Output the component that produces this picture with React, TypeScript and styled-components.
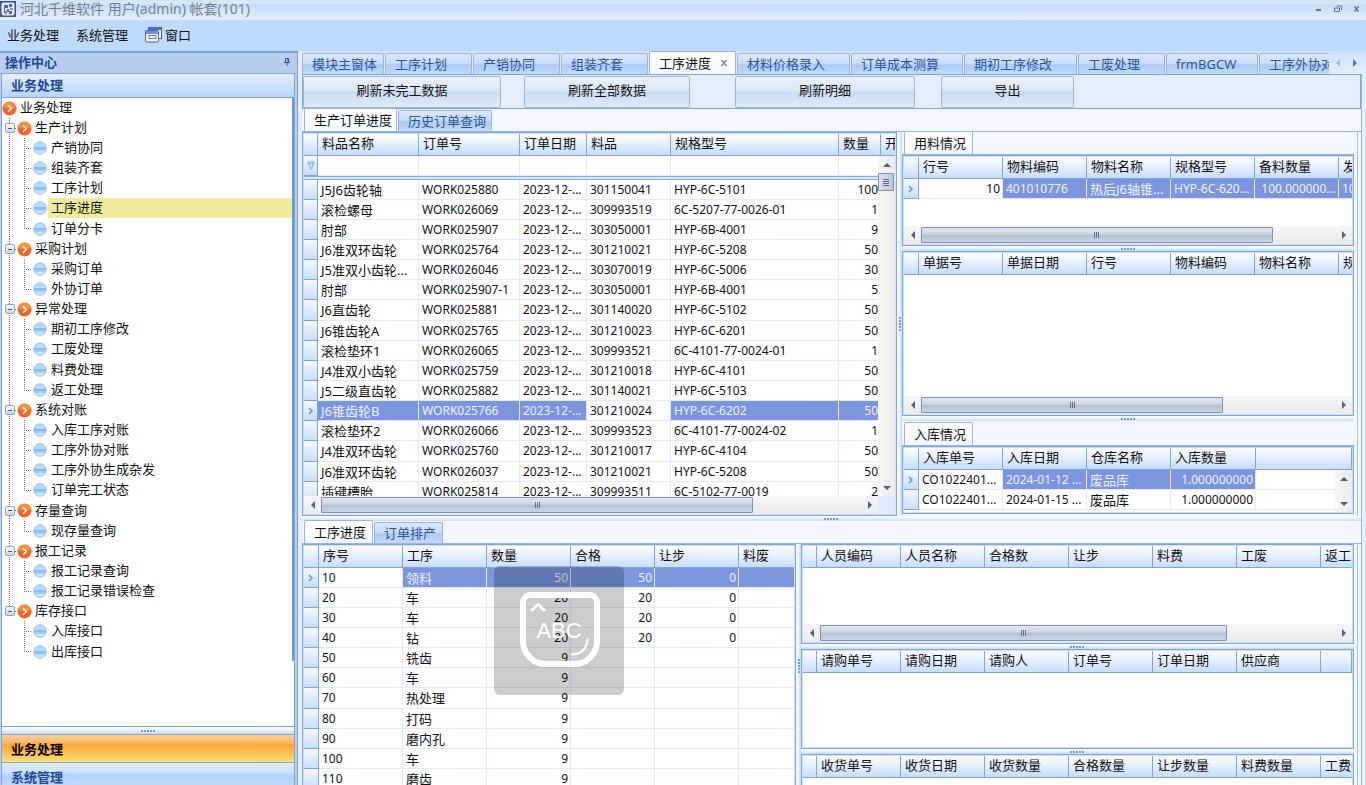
import React from 'react';
import styled, { createGlobalStyle, css } from 'styled-components';

const LINE = '#7ea6dc';
const HEAD_BG = 'linear-gradient(#fbfdff, #e6f0ff 45%, #c6ddfd)';

const GlobalStyle = createGlobalStyle`
  *, *::before, *::after { box-sizing: border-box; }
  body {
    margin: 0;
    overflow: hidden;
    background: #e3eeff;
    color: #111;
    font-family: "Noto Sans", "Noto Sans CJK SC", sans-serif;
    font-size: 13px;
    line-height: 18px;
  }
  button {
    margin: 0;
    padding: 0;
    border: 0;
    background: none;
    color: inherit;
    font: inherit;
    text-align: left;
    white-space: nowrap;
  }
  ul { margin: 0; padding: 0; list-style: none; }
`;

/* ---------- window frame ---------- */

const Window = styled.div`
  display: flex;
  flex-direction: column;
  height: 100vh;
  overflow: hidden;
`;

const TitleBar = styled.header`
  display: flex;
  align-items: center;
  flex: none;
  height: 21px;
  padding-bottom: 3px;
  border-bottom: 1px solid #b4e0fa;
  background: linear-gradient(#d3e2f8 0, #dbe8fa 3px, #c6dbf8 5px, #e2edfc 19px);
`;

const Title = styled.h1`
  flex: 1;
  margin: 0 0 0 4px;
  color: #78828f;
  font-size: 14px;
  font-weight: 400;
  line-height: 16px;
`;

const WindowButton = styled.button`
  display: flex;
  justify-content: center;
  width: 19px;
`;

const MenuBar = styled.nav`
  display: flex;
  align-items: center;
  flex: none;
  gap: 17px;
  height: 30px;
  padding: 0 7px 3px;
  background: #bddaff;
`;

const MenuItem = styled.button`
  display: flex;
  align-items: center;
  gap: 3px;
`;

const Workspace = styled.div`
  display: flex;
  flex: 1;
  gap: 4px;
  min-height: 0;
`;

/* ---------- sidebar ---------- */

const Sidebar = styled.aside`
  display: flex;
  flex-direction: column;
  flex: none;
  width: 298px;
  padding: 0 2px 0 1px;
  border-top: 2px solid #7b9ed2;
  border-right: 1px solid #7b9ed2;
  background: #b7ceee;
`;

const SidebarTitle = styled.h2`
  display: flex;
  align-items: center;
  justify-content: space-between;
  flex: none;
  height: 20px;
  margin: 0;
  padding: 0 4px 2px;
  color: #1d4a94;
  font-size: 13px;
  line-height: 18px;
`;

const SidebarBody = styled.div`
  display: flex;
  flex-direction: column;
  flex: 1;
  min-height: 0;
  overflow: hidden;
  border: 1px solid ${LINE};
  border-bottom: 0;
  background: #fff;
`;

const SectionTitle = styled.h3`
  flex: none;
  height: 24px;
  margin: 0;
  padding: 0 9px;
  border-bottom: 1px solid ${LINE};
  background: linear-gradient(#e6f0ff, #d0e3ff 45%, #b5d5ff);
  color: #1d4a94;
  font-size: 13px;
  line-height: 22px;
`;

const Tree = styled.ul`
  flex: 1;
  min-height: 0;
  overflow: hidden;
  padding-right: 2px;
  background: linear-gradient(#6c98d6, #6c98d6) right top / 2px 563px no-repeat;
`;

const TreeRow = styled.li`
  display: flex;
  align-items: center;
  height: 20px;
  &:nth-child(7n) { height: 21px; }
`;

const dots = (dir: string) => `repeating-linear-gradient(${dir}, #777 0 1px, transparent 1px 2px)`;

const Guide = styled.span<{ $line: 'none' | 'full' | 'half'; $tick?: boolean }>`
  flex: none;
  align-self: stretch;
  display: flex;
  align-items: center;
  justify-content: center;
  width: 15px;
  background-repeat: no-repeat;
  background-image: ${p => (p.$line === 'none' ? 'none' : dots('180deg'))}${p => (p.$tick ? `, ${dots('90deg')}` : '')};
  background-size: 1px ${p => (p.$line === 'half' ? '50%' : '100%')}, 8px 1px;
  background-position: 7px 0, 7px 10px;
`;

const Expander = styled.button`
  display: flex;
  align-items: center;
  justify-content: center;
  width: 10px;
  height: 10px;
  border: 1px solid #8ba3c7;
  border-radius: 2px;
  background: linear-gradient(#fff, #c9d6ea);
  &::before { content: ''; width: 4px; height: 1px; background: #3c5a8c; }
`;

const LeafIconBox = styled.span`
  display: flex;
  flex: none;
  width: 16px;
  padding-left: 1px;
`;

const TreeLabel = styled.button<{ $active?: boolean }>`
  flex: 1;
  align-self: stretch;
  padding: 0 0 2px 3px;
  background: ${p => (p.$active ? '#efeb9b' : 'none')};
`;

const Grip = styled.div<{ $vertical?: boolean }>`
  display: flex;
  flex: none;
  align-items: center;
  justify-content: center;
  ${p => (p.$vertical ? 'width: 5px;' : 'height: 5px;')}
  background: linear-gradient(${p => (p.$vertical ? '90deg' : '180deg')}, #fff, #e8f2ff 50%, #c4dcfb);
  &::before {
    content: '';
    ${p => (p.$vertical ? 'width: 2px; height: 15px;' : 'width: 15px; height: 2px;')}
    background: repeating-linear-gradient(${p => (p.$vertical ? '180deg' : '90deg')}, #6f9edd 0 2px, transparent 2px 3px);
  }
`;

const NavGrip = styled(Grip)`
  height: 8px;
  border-top: 1px solid ${LINE};
`;

const NavButton = styled.button<{ $active?: boolean }>`
  flex: none;
  height: 28px;
  padding: 0 9px;
  border-top: 1px solid ${LINE};
  background: ${p =>
    p.$active
      ? 'linear-gradient(#ffcf94, #ffbd6c 25%, #ffa63b 38%, #fdc455 70%, #fde07c)'
      : 'linear-gradient(#dcebff, #cde1ff 35%, #afd0ff 45%, #c1dcff)'};
  color: ${p => (p.$active ? '#000' : '#1d4a94')};
  font-weight: 700;
  &:last-child { margin-bottom: -5px; }
`;

/* ---------- document area ---------- */

const Main = styled.main`
  display: flex;
  flex-direction: column;
  flex: 1;
  min-width: 0;
`;

const TabStrip = styled.div`
  display: flex;
  align-items: flex-end;
  flex: none;
  height: 23px;
  padding-right: 3px;
  background: linear-gradient(#cfe2fd, #e3eeff);
`;

const TabScroller = styled.div`
  display: flex;
  align-items: flex-end;
  flex: 1;
  gap: 1px;
  min-width: 0;
  overflow: hidden;
`;

const Tab = styled.button<{ $active?: boolean; $width: number }>`
  display: flex;
  align-items: center;
  justify-content: space-between;
  flex: none;
  width: ${p => p.$width}px;
  height: 21px;
  padding: 0 7px 1px 9px;
  border: 1px solid #9bb6dc;
  border-bottom: 0;
  border-radius: 2px 2px 0 0;
  background: linear-gradient(#dbe8fa, #c9ddf8 45%, #abcbf4 55%, #c3dbfa);
  color: #2b549e;
  ${p =>
    p.$active &&
    css`
      height: 23px;
      background: linear-gradient(#fff, #f3f7ff);
      color: #111;
    `}
`;

const TabArrow = styled.button`
  display: flex;
  align-items: center;
  justify-content: center;
  width: 17px;
  height: 23px;
`;

const Page = styled.div`
  display: flex;
  flex-direction: column;
  flex: 1;
  min-height: 0;
  margin-right: 4px;
  border-top: 1px solid ${LINE};
  border-right: 1px solid #9db7de;
  background: #f3f7ff;
`;

const Toolbar = styled.div`
  display: flex;
  align-items: center;
  flex: none;
  height: 34px;
  border: 1px solid ${LINE};
  border-top: 0;
  background: #e3eeff;
`;

const ToolButton = styled.button<{ $width: number; $before?: number }>`
  width: ${p => p.$width}px;
  height: 32px;
  margin-left: ${p => p.$before ?? 0}px;
  padding-bottom: 3px;
  border: 1px solid #9fb6d8;
  border-radius: 2px;
  background: linear-gradient(#e9f1fb, #dbe8f8 45%, #cadcf2 52%, #dfeafa);
  text-align: center;
`;

const SubTabs = styled.div<{ $height?: number }>`
  display: flex;
  align-items: flex-end;
  flex: none;
  gap: 1px;
  height: ${p => p.$height ?? 23}px;
  padding: 1px 2px 0;
  border-bottom: 1px solid #9fb4d8;
`;

const Upper = styled.div`
  display: flex;
  flex: 385 1 0;
  min-height: 0;
  margin-right: 3px;
  padding-right: 3px;
  border-right: 1px solid #a9bfe0;
`;

const Lower = styled(Upper)`
  flex: 244 1 0;
  margin-bottom: -3px;
`;

const Column = styled.section<{ $grow: number }>`
  position: relative;
  display: flex;
  flex-direction: column;
  flex: ${p => p.$grow} 1 0;
  min-width: 0;
`;

const Panel = styled.div<{ $height?: number; $after?: number }>`
  position: relative;
  display: flex;
  flex-direction: column;
  flex: ${p => (p.$height ? `0 0 ${p.$height}px` : '1 1 0')};
  min-height: 0;
  margin-bottom: ${p => p.$after ?? 0}px;
  padding: 1px;
  border: 1px solid ${LINE};
  background: #cfe1fb;
`;

const Viewport = styled.div`
  flex: 1;
  min-height: 0;
  overflow: hidden;
  background: #fff;
`;

const Table = styled.table<{ $fill?: boolean }>`
  width: ${p => (p.$fill ? '100%' : '1px')};
  border-spacing: 0;
  table-layout: fixed;
`;

const Col = styled.col<{ $width?: number }>`
  width: ${p => (p.$width ? `${p.$width}px` : 'auto')};
`;

const HeadCell = styled.th`
  height: 22px;
  padding: 0 0 3px 4px;
  overflow: hidden;
  border-right: 1px solid ${LINE};
  border-bottom: 1px solid ${LINE};
  background: ${HEAD_BG};
  font-weight: 400;
  line-height: 17px;
  text-align: left;
  white-space: nowrap;
`;

const Row = styled.tr`
  height: 20px;
  &:nth-child(7n) { height: 21px; }
`;

const Cell = styled.td<{ $selected?: boolean; $num?: boolean; $code?: boolean }>`
  padding: 0 2px 0 3px;
  overflow: hidden;
  border-right: 1px solid #dfebfd;
  border-bottom: 1px solid #dfebfd;
  background: ${p => (p.$selected ? '#7b96df' : '#fff')};
  color: ${p => (p.$selected ? '#edf2ff' : '#111')};
  font-size: ${p => (p.$code ? 12 : 13)}px;
  line-height: 18px;
  text-align: ${p => (p.$num ? 'right' : 'left')};
  white-space: nowrap;
`;

const Indicator = styled.td`
  padding: 0;
  border-right: 1px solid ${LINE};
  border-bottom: 1px solid ${LINE};
  background: linear-gradient(#f4f9ff, #c9defc);
  line-height: 0;
  text-align: center;
`;

const FilterRule = styled.td`
  height: 4px;
  padding: 0;
  border-top: 1px solid #86aee3;
  border-bottom: 1px solid #86aee3;
  background: #d7e7fd;
`;

/* ---------- scroll bars ---------- */

const HBar = styled.div`
  display: flex;
  flex: 1;
  height: 18px;
  background: linear-gradient(#f6f6f6, #ebebed);
`;

const BarLine = styled.div`
  display: flex;
  flex: none;
`;

const BarCorner = styled.span`
  flex: none;
  width: 17px;
  background: #dfebfc;
`;

const ArrowButton = styled.button`
  display: flex;
  align-items: center;
  justify-content: center;
  flex: none;
  width: 17px;
  height: 17px;
`;

const Track = styled.div`
  flex: 1;
  padding: 1px 0;
`;

const Thumb = styled.div<{ $size: number }>`
  display: flex;
  align-items: center;
  justify-content: center;
  width: ${p => p.$size}%;
  height: 16px;
  border: 1px solid #8291b3;
  border-radius: 1px;
  background: linear-gradient(#dfe5ee, #cdd8e5 45%, #b0c0d4 50%, #c8d4e2);
  &::before {
    content: '';
    width: 5px;
    height: 6px;
    background: repeating-linear-gradient(90deg, #5f6f90 0 1px, transparent 1px 2px);
  }
`;

const VBar = styled.div<{ $top: number; $bottom: number }>`
  position: absolute;
  top: ${p => p.$top}px;
  right: 1px;
  bottom: ${p => p.$bottom}px;
  display: flex;
  flex-direction: column;
  justify-content: space-between;
  width: 17px;
  background: linear-gradient(90deg, #f6f6f6, #ebebed);
`;

const VThumb = styled.div`
  display: flex;
  align-items: center;
  justify-content: center;
  flex: none;
  width: 16px;
  height: 18px;
  border: 1px solid #8291b3;
  border-radius: 1px;
  background: linear-gradient(90deg, #dfe5ee, #b9c8da);
  &::before {
    content: '';
    width: 6px;
    height: 7px;
    background: repeating-linear-gradient(#5f6f90 0 1px, transparent 1px 2px);
  }
`;

const Spacer = styled.span`
  flex: 1;
`;

const ImeBadge = styled.div`
  position: absolute;
  z-index: 2;
  top: 22px;
  left: 192px;
  display: flex;
  align-items: center;
  justify-content: center;
  width: 130px;
  height: 129px;
  border-radius: 6px;
  background: rgba(0, 0, 0, 0.2);
`;

/* ---------- drawings ---------- */

const AppLogo = () => (
  <svg width="16" height="16" viewBox="0 0 16 16">
    <rect width="16" height="16" fill="#47538c" />
    <rect x="1.5" y="1.5" width="13" height="13" rx="2" fill="#e8ecfa" />
    <path d="M4 4h4v3H5v5H4zM9 3h3v3H9zM7 8h2v2h3v3H9v-2H7z" fill="#4a62b8" />
    <path d="M10 7h3v2h-3zM5 10h2v3H5z" fill="#7f93d8" />
  </svg>
);

const WindowsIcon = () => (
  <svg width="17" height="17" viewBox="0 0 17 17">
    <rect x="3.5" y="1.5" width="13" height="11" fill="#f4f6fb" stroke="#4a5c94" />
    <rect x="3" y="1" width="14" height="3" fill="#3f6fd0" />
    <rect x="0.5" y="4.500" width="13" height="11.500" rx="1" fill="#f0f3fa" stroke="#5d6b96" />
    <rect x="1" y="5" width="12" height="3" fill="#6a93e0" />
    <rect x="4" y="9.500" width="7" height="3" fill="#fff" stroke="#6b7898" />
  </svg>
);

const PinIcon = () => (
  <svg width="8" height="10" viewBox="0 0 8 10">
    <path d="M2.500 1.500h3v4h-3zM1 5.500h6M4 6v3" fill="none" stroke="#2d57a0" />
    <path d="M5 1v5" stroke="#2d57a0" />
  </svg>
);

const OrangeIcon = () => (
  <svg width="15" height="15" viewBox="0 0 15 15" style={{ flex: 'none' }}>
    <circle cx="7.500" cy="7.500" r="7" fill="#f9622b" />
    <path d="M1.200 6a6.500 6.500 0 0 1 12.600 0q-6 3-12.600 0z" fill="#fb9038" />
    <path d="M6 4.300l3.400 3.200L6 10.700" fill="none" stroke="#fff" strokeWidth="1.400" />
  </svg>
);

const BlueIcon = () => (
  <svg width="14" height="14" viewBox="0 0 14 14" style={{ flex: 'none' }}>
    <circle cx="7" cy="7" r="6.200" fill="#b9dcfe" stroke="#8fc0f6" />
    <path d="M1.300 6h11.400v2.500H1.300z" fill="#86bbf7" />
    <path d="M1.800 8.500h10.400l-1 1.500H2.800z" fill="#a3cdfb" />
    <path d="M3 10.300h8a5 5 0 0 1-8 0z" fill="#d6ecff" />
  </svg>
);

const RowMark = () => (
  <svg width="6" height="8" viewBox="0 0 6 8">
    <path d="M1 1l3 3-3 3" fill="none" stroke="#5c95e4" strokeWidth="1.500" />
  </svg>
);

const FilterIcon = () => (
  <svg width="8" height="9" viewBox="0 0 8 9">
    <path d="M1 1h6v2L5 5v3H3V5L1 3zM1 3h6" fill="#e4f0ff" stroke="#7daae6" />
  </svg>
);

const arrowPaths = {
  left: 'M6 0v8L2 4z',
  right: 'M2 0v8l4-4z',
  up: 'M0 6h8L4 2z',
  down: 'M0 2h8L4 6z',
};

const Arrow = ({ dir, color = '#4d5f8a' }: { dir: keyof typeof arrowPaths; color?: string }) => (
  <svg width="8" height="8" viewBox="0 0 8 8">
    <path d={arrowPaths[dir]} fill={color} />
  </svg>
);

const KeyboardIcon = () => (
  <svg width="84" height="80" viewBox="0 0 84 80">
    <path
      d="M13 4h60a7 7 0 0 1 7 7V50a23 23 0 0 1-23 23H29A23 23 0 0 1 6 50V11a7 7 0 0 1 7-7z"
      fill="none"
      stroke="#fff"
      strokeWidth="6"
    />
    <path d="M14 20l7-6.500 7 6.500" fill="none" stroke="#fff" strokeWidth="3" />
    <path d="M70.500 47.500c0 10-6 16-16.500 16" fill="none" stroke="#fff" strokeWidth="2" />
    <text x="42" y="47" textAnchor="middle" fill="#fff" fontFamily="Liberation Sans, sans-serif" fontSize="22">
      ABC
    </text>
  </svg>
);

/* ---------- data ---------- */

const tree: [string, string[]][] = [
  ['生产计划', ['产销协同', '组装齐套', '工序计划', '工序进度', '订单分卡']],
  ['采购计划', ['采购订单', '外协订单']],
  ['异常处理', ['期初工序修改', '工废处理', '料费处理', '返工处理']],
  ['系统对账', ['入库工序对账', '工序外协对账', '工序外协生成杂发', '订单完工状态']],
  ['存量查询', ['现存量查询']],
  ['报工记录', ['报工记录查询', '报工记录错误检查']],
  ['库存接口', ['入库接口', '出库接口']],
];

const tabs: [string, number][] = [
  ['模块主窗体', 82],
  ['工序计划', 87],
  ['产销协同', 87],
  ['组装齐套', 87],
  ['工序进度', 87],
  ['材料价格录入', 113],
  ['订单成本测算', 112],
  ['期初工序修改', 113],
  ['工废处理', 87],
  ['frmBGCW', 92],
  ['工序外协对账', 113],
];

type ColumnDef = { name: string; width?: number; code?: boolean; num?: boolean };

const orderColumns: ColumnDef[] = [
  { name: '料品名称', width: 101 },
  { name: '订单号', width: 101, code: true },
  { name: '订单日期', width: 67, code: true },
  { name: '料品', width: 84, code: true },
  { name: '规格型号', width: 168, code: true },
  { name: '数量', width: 42, code: true, num: true },
  { name: '开工', width: 84 },
];

const orders = [
  ['J5J6齿轮轴', 'WORK025880', '301150041', 'HYP-6C-5101', '100'],
  ['滚检螺母', 'WORK026069', '309993519', '6C-5207-77-0026-01', '1'],
  ['肘部', 'WORK025907', '303050001', 'HYP-6B-4001', '9'],
  ['J6准双环齿轮', 'WORK025764', '301210021', 'HYP-6C-5208', '50'],
  ['J5准双小齿轮...', 'WORK026046', '303070019', 'HYP-6C-5006', '30'],
  ['肘部', 'WORK025907-1', '303050001', 'HYP-6B-4001', '5'],
  ['J6直齿轮', 'WORK025881', '301140020', 'HYP-6C-5102', '50'],
  ['J6锥齿轮A', 'WORK025765', '301210023', 'HYP-6C-6201', '50'],
  ['滚检垫环1', 'WORK026065', '309993521', '6C-4101-77-0024-01', '1'],
  ['J4准双小齿轮', 'WORK025759', '301210018', 'HYP-6C-4101', '50'],
  ['J5二级直齿轮', 'WORK025882', '301140021', 'HYP-6C-5103', '50'],
  ['J6锥齿轮B', 'WORK025766', '301210024', 'HYP-6C-6202', '50'],
  ['滚检垫环2', 'WORK026066', '309993523', '6C-4101-77-0024-02', '1'],
  ['J4准双环齿轮', 'WORK025760', '301210017', 'HYP-6C-4104', '50'],
  ['J6准双环齿轮', 'WORK026037', '301210021', 'HYP-6C-5208', '50'],
  ['插键槽胎', 'WORK025814', '309993511', '6C-5102-77-0019', '2'],
].map(([name, no, item, spec, qty]) => [name, no, '2023-12-...', item, spec, qty, '']);

const stepColumns: ColumnDef[] = [
  { name: '序号', width: 84, code: true },
  { name: '工序', width: 84 },
  { name: '数量', width: 84, code: true, num: true },
  { name: '合格', width: 84, code: true, num: true },
  { name: '让步', width: 84, code: true, num: true },
  { name: '料废', width: 84, code: true, num: true },
];

const steps = [
  ['10', '领料', '50', '50', '0', ''],
  ['20', '车', '20', '20', '0', ''],
  ['30', '车', '20', '20', '0', ''],
  ['40', '钻', '20', '20', '0', ''],
  ['50', '铣齿', '9', '', '', ''],
  ['60', '车', '9', '', '', ''],
  ['70', '热处理', '9', '', '', ''],
  ['80', '打码', '9', '', '', ''],
  ['90', '磨内孔', '9', '', '', ''],
  ['100', '车', '9', '', '', ''],
  ['110', '磨齿', '9', '', '', ''],
];

const materialColumns: ColumnDef[] = [
  { name: '行号', width: 84, code: true, num: true },
  { name: '物料编码', width: 84, code: true },
  { name: '物料名称', width: 84 },
  { name: '规格型号', width: 84, code: true },
  { name: '备料数量', width: 84, code: true, num: true },
  { name: '发料数量', width: 84, code: true },
];

const receiptColumns: ColumnDef[] = [
  { name: '入库单号', width: 84, code: true },
  { name: '入库日期', width: 84, code: true },
  { name: '仓库名称', width: 84 },
  { name: '入库数量', width: 85, code: true, num: true },
  { name: '' },
];

const plain = (...names: string[]): ColumnDef[] => names.map(name => ({ name, width: 84 }));

/* ---------- parts ---------- */

type GridProps = {
  columns: ColumnDef[];
  rows?: string[][];
  current?: number;
  selected?: number[];
  filter?: boolean;
  lead?: number;
};

const Grid = ({ columns, rows = [], current = -1, selected = [], filter, lead = 14 }: GridProps) => (
  <Table $fill={columns.some(c => !c.width)}>
    <colgroup>
      <Col $width={lead} />
      {columns.map((c, i) => (
        <Col key={i} $width={c.width} />
      ))}
    </colgroup>
    <thead>
      <tr>
        <HeadCell />
        {columns.map((c, i) => (
          <HeadCell key={i} scope="col">{c.name}</HeadCell>
        ))}
      </tr>
      {filter && (
        <>
          <Row>
            <Indicator><FilterIcon /></Indicator>
            {columns.map((c, i) => <Cell key={i} />)}
          </Row>
          <tr><FilterRule colSpan={columns.length + 1} /></tr>
        </>
      )}
    </thead>
    <tbody>
      {rows.map((row, r) => (
        <Row key={r}>
          <Indicator>{r === current && <RowMark />}</Indicator>
          {row.map((value, c) => (
            <Cell
              key={c}
              $code={columns[c].code}
              $num={columns[c].num}
              $selected={r === current && selected.includes(c)}
            >
              {value}
            </Cell>
          ))}
        </Row>
      ))}
    </tbody>
  </Table>
);

const HScroll = ({ size }: { size: number }) => (
  <HBar>
    <ArrowButton aria-label="向左"><Arrow dir="left" /></ArrowButton>
    <Track><Thumb $size={size} /></Track>
    <ArrowButton aria-label="向右"><Arrow dir="right" /></ArrowButton>
  </HBar>
);

const TreeView = () => (
  <Tree>
    <TreeRow>
      <OrangeIcon />
      <TreeLabel>业务处理</TreeLabel>
    </TreeRow>
    {tree.map(([group, leaves], g) => {
      const lastGroup = g === tree.length - 1;
      return (
        <React.Fragment key={group}>
          <TreeRow>
            <Guide $line={lastGroup ? 'half' : 'full'} $tick><Expander aria-label="折叠" /></Guide>
            <OrangeIcon />
            <TreeLabel>{group}</TreeLabel>
          </TreeRow>
          {leaves.map((leaf, i) => (
            <TreeRow key={leaf}>
              <Guide $line={lastGroup ? 'none' : 'full'} />
              <Guide $line={i === leaves.length - 1 ? 'half' : 'full'} $tick />
              <LeafIconBox><BlueIcon /></LeafIconBox>
              <TreeLabel $active={leaf === '工序进度'}>{leaf}</TreeLabel>
            </TreeRow>
          ))}
        </React.Fragment>
      );
    })}
  </Tree>
);

export default function App() {
  return (
    <Window>
      <GlobalStyle />
      <TitleBar>
        <AppLogo />
        <Title>河北千维软件 用户(admin) 帐套(101)</Title>
        <WindowButton aria-label="最小化">
          <svg width="8" height="8" viewBox="0 0 8 8"><path d="M1 5h5" stroke="#66718a" strokeWidth="2" /></svg>
        </WindowButton>
        <WindowButton aria-label="还原">
          <svg width="8" height="8" viewBox="0 0 8 8">
            <path d="M2.500 1h5v4M.5 3h5v3.500h-5z" fill="none" stroke="#66718a" />
          </svg>
        </WindowButton>
        <WindowButton aria-label="关闭">
          <svg width="8" height="8" viewBox="0 0 8 8"><path d="M1.500 1.500l4 5M5.500 1.500l-4 5" stroke="#66718a" strokeWidth="1.500" /></svg>
        </WindowButton>
      </TitleBar>
      <MenuBar>
        <MenuItem>业务处理</MenuItem>
        <MenuItem>系统管理</MenuItem>
        <MenuItem><WindowsIcon />窗口</MenuItem>
      </MenuBar>

      <Workspace>
        <Sidebar>
          <SidebarTitle>操作中心<PinIcon /></SidebarTitle>
          <SidebarBody>
            <SectionTitle>业务处理</SectionTitle>
            <TreeView />
            <NavGrip />
            <NavButton $active>业务处理</NavButton>
            <NavButton>系统管理</NavButton>
          </SidebarBody>
        </Sidebar>

        <Main>
          <TabStrip>
            <TabScroller role="tablist">
              {tabs.map(([name, width], i) => (
                <Tab key={name} role="tab" aria-selected={i === 4} $active={i === 4} $width={width}>
                  {name}
                  {i === 4 && (
                    <svg width="8" height="8" viewBox="0 0 8 8">
                      <path d="M1.500 1l5 6M6.500 1l-5 6" stroke="#7a8cab" strokeWidth="1.500" />
                    </svg>
                  )}
                </Tab>
              ))}
            </TabScroller>
            <TabArrow aria-label="上一个"><Arrow dir="left" color="#9dbbe6" /></TabArrow>
            <TabArrow aria-label="下一个"><Arrow dir="right" color="#4a7cc8" /></TabArrow>
          </TabStrip>

          <Page>
            <Toolbar>
              <ToolButton $width={198}>刷新未完工数据</ToolButton>
              <ToolButton $width={166} $before={23}>刷新全部数据</ToolButton>
              <ToolButton $width={180} $before={45}>刷新明细</ToolButton>
              <ToolButton $width={133} $before={26}>导出</ToolButton>
            </Toolbar>

            <SubTabs role="tablist">
              <Tab role="tab" aria-selected $active $width={93}>生产订单进度</Tab>
              <Tab role="tab" $width={94}>历史订单查询</Tab>
            </SubTabs>
            <Upper>
              <Column $grow={595}>
                <Panel>
                  <Viewport>
                    <Grid columns={orderColumns} rows={orders} current={11} selected={[0, 1, 2, 4, 5]} filter />
                  </Viewport>
                  <BarLine>
                    <HScroll size={80} />
                    <BarCorner />
                  </BarLine>
                  <VBar $top={23} $bottom={19}>
                    <ArrowButton aria-label="向上"><Arrow dir="up" /></ArrowButton>
                    <VThumb />
                    <Spacer />
                    <ArrowButton aria-label="向下"><Arrow dir="down" /></ArrowButton>
                  </VBar>
                </Panel>
              </Column>
              <Grip $vertical />
              <Column $grow={452}>
                <SubTabs role="tablist">
                  <Tab role="tab" aria-selected $active $width={69}>用料情况</Tab>
                </SubTabs>
                <Panel $height={91}>
                  <Viewport>
                    <Grid
                      columns={materialColumns}
                      rows={[['10', '401010776', '热后J6轴锥...', 'HYP-6C-620...', '100.000000...', '100']]}
                      current={0}
                      selected={[1, 2, 3, 4, 5]}
                      lead={15}
                    />
                  </Viewport>
                  <BarLine><HScroll size={85} /></BarLine>
                </Panel>
                <Grip />
                <Panel>
                  <Viewport>
                    <Grid columns={plain('单据号', '单据日期', '行号', '物料编码', '物料名称', '规格型号')} lead={15} />
                  </Viewport>
                  <BarLine><HScroll size={73} /></BarLine>
                </Panel>
                <Grip />
                <SubTabs $height={25} role="tablist">
                  <Tab role="tab" aria-selected $active $width={69}>入库情况</Tab>
                </SubTabs>
                <Panel $height={68} $after={2}>
                  <Viewport>
                    <Grid
                      columns={receiptColumns}
                      rows={[
                        ['CO1022401...', '2024-01-12 ...', '废品库', '1.000000000', ''],
                        ['CO1022401...', '2024-01-15 ...', '废品库', '1.000000000', ''],
                      ]}
                      current={0}
                      selected={[1, 2, 3]}
                      lead={15}
                    />
                  </Viewport>
                  <VBar $top={23} $bottom={1}>
                    <ArrowButton aria-label="向上"><Arrow dir="up" /></ArrowButton>
                    <ArrowButton aria-label="向下"><Arrow dir="down" /></ArrowButton>
                  </VBar>
                </Panel>
              </Column>
            </Upper>

            <Grip />
            <SubTabs role="tablist">
              <Tab role="tab" aria-selected $active $width={69}>工序进度</Tab>
              <Tab role="tab" $width={69}>订单排产</Tab>
            </SubTabs>
            <Lower>
              <Column $grow={494}>
                <Panel>
                  <Viewport>
                    <Grid columns={stepColumns} rows={steps} current={0} selected={[1, 2, 3, 4, 5]} lead={15} />
                  </Viewport>
                </Panel>
                <ImeBadge><KeyboardIcon /></ImeBadge>
              </Column>
              <Grip $vertical />
              <Column $grow={553}>
                <Panel $height={100}>
                  <Viewport>
                    <Grid columns={plain('人员编码', '人员名称', '合格数', '让步', '料费', '工废', '返工')} />
                  </Viewport>
                  <BarLine><HScroll size={79} /></BarLine>
                </Panel>
                <Grip />
                <Panel $height={100}>
                  <Viewport>
                    <Grid columns={[...plain('请购单号', '请购日期', '请购人', '订单号', '订单日期', '供应商'), { name: '' }]} />
                  </Viewport>
                </Panel>
                <Grip />
                <Panel>
                  <Viewport>
                    <Grid columns={plain('收货单号', '收货日期', '收货数量', '合格数量', '让步数量', '料费数量', '工费数量')} />
                  </Viewport>
                </Panel>
              </Column>
            </Lower>
          </Page>
        </Main>
      </Workspace>
    </Window>
  );
}
